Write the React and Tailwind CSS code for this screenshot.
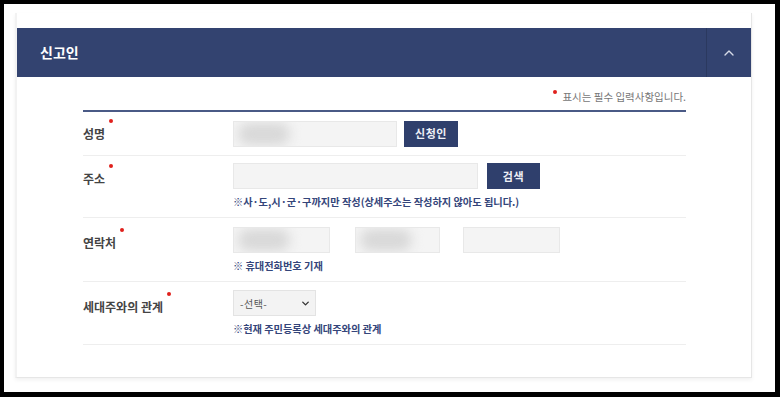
import { ChevronUp, ChevronDown } from 'lucide-react';

const font = { fontFamily: '"Noto Sans CJK KR", "Noto Sans", sans-serif' };

function Dot({ className = '' }) {
  return <span className={`inline-block w-[4px] h-[4px] rounded-full bg-[#e0201c] ${className}`} />;
}

function Label({ children }) {
  return (
    <div className="w-[150px] shrink-0 flex items-start text-[12px] font-bold text-[#444] leading-none">
      <span>{children}</span>
      <Dot className="ml-[4px] -mt-[9px]" />
    </div>
  );
}

function Blur({ className = '' }) {
  return (
    <div className={`h-[26px] bg-[#f4f4f4] border border-[#e8e8e8] relative overflow-hidden ${className}`}>
      <div className="absolute left-[4px] top-[1px] w-[52px] h-[22px] rounded-full bg-[#d8d8d8] blur-[6px]" />
    </div>
  );
}

function Input({ className = '' }) {
  return <div className={`h-[26px] bg-[#f4f4f4] border border-[#e8e8e8] ${className}`} />;
}

function Btn({ children, className = '' }) {
  return (
    <button className={`h-[26px] bg-[#2f3f6c] text-[#eef0f6] text-[11px] font-semibold tracking-wider flex items-center justify-center ${className}`}>
      {children}
    </button>
  );
}

function Help({ children }) {
  return <p className="mt-[8px] text-[10.2px] font-bold text-[#34457a] leading-none">{children}</p>;
}

export default function App() {
  return (
    <div className="w-[780px] h-[397px] bg-black p-[4px] pr-[5px] pb-[5px]" style={font}>
      <div className="w-full h-full bg-white pl-[11px] pt-[9px]">
        <div className="w-[737px] h-[365px] border-b border-r border-[#e6e6e6] border-l-2 border-l-[#f2f2f2] pt-[15px] shadow-[0_2px_4px_rgba(0,0,0,0.06)]">
          {/* Header */}
          <div className="h-[49px] bg-[#334370] flex items-center">
            <h2 className="flex-1 pl-[23px] text-white text-[14px] font-bold">신고인</h2>
            <div className="w-[45px] h-full border-l border-[#2b395f] flex items-center justify-center">
              <ChevronUp className="w-[16px] h-[16px] text-[#d6dbe8]" strokeWidth={2} />
            </div>
          </div>

          <div className="ml-[66px] mr-[65px]">
            {/* Notice */}
            <div className="h-[33px] flex items-end justify-end pb-[8px]">
              <Dot className="mb-[8px] mr-[5px]" />
              <span className="text-[10.5px] text-[#777] leading-none">표시는 필수 입력사항입니다.</span>
            </div>
            <div className="h-[2px] bg-[#4a5a86]" />

            {/* 성명 */}
            <div className="h-[44px] flex items-center border-b border-[#eeeeee]">
              <Label>성명</Label>
              <Blur className="w-[164px]" />
              <Btn className="ml-[7px] w-[54px]">신청인</Btn>
            </div>

            {/* 주소 */}
            <div className="h-[62px] flex border-b border-[#eeeeee] pt-[7px]">
              <div className="pt-[10px]"><Label>주소</Label></div>
              <div>
                <div className="flex">
                  <Input className="w-[245px]" />
                  <Btn className="ml-[9px] w-[53px]">검색</Btn>
                </div>
                <Help>※사·도,시·군·구까지만 작성(상세주소는 작성하지 않아도 됩니다.)</Help>
              </div>
            </div>

            {/* 연락처 */}
            <div className="h-[64px] flex border-b border-[#eeeeee] pt-[9px]">
              <div className="pt-[10px]"><Label>연락처</Label></div>
              <div>
                <div className="flex">
                  <Blur className="w-[97px]" />
                  <Blur className="ml-[25px] w-[85px]" />
                  <Input className="ml-[23px] w-[97px]" />
                </div>
                <Help>※ 휴대전화번호 기재</Help>
              </div>
            </div>

            {/* 세대주와의 관계 */}
            <div className="h-[63px] flex border-b border-[#eeeeee] pt-[8px]">
              <div className="pt-[11px]"><Label>세대주와의 관계</Label></div>
              <div>
                <div className="w-[83px] h-[26px] bg-[#f3f3f3] border border-[#e3e3e3] flex items-center justify-between pl-[6px] pr-[4px]">
                  <span className="text-[10px] text-[#555] tracking-wider">-선택-</span>
                  <ChevronDown className="w-[11px] h-[11px] text-[#333]" strokeWidth={3} />
                </div>
                <Help>※현재 주민등록상 세대주와의 관계</Help>
              </div>
            </div>
          </div>
        </div>
      </div>
    </div>
  );
}
